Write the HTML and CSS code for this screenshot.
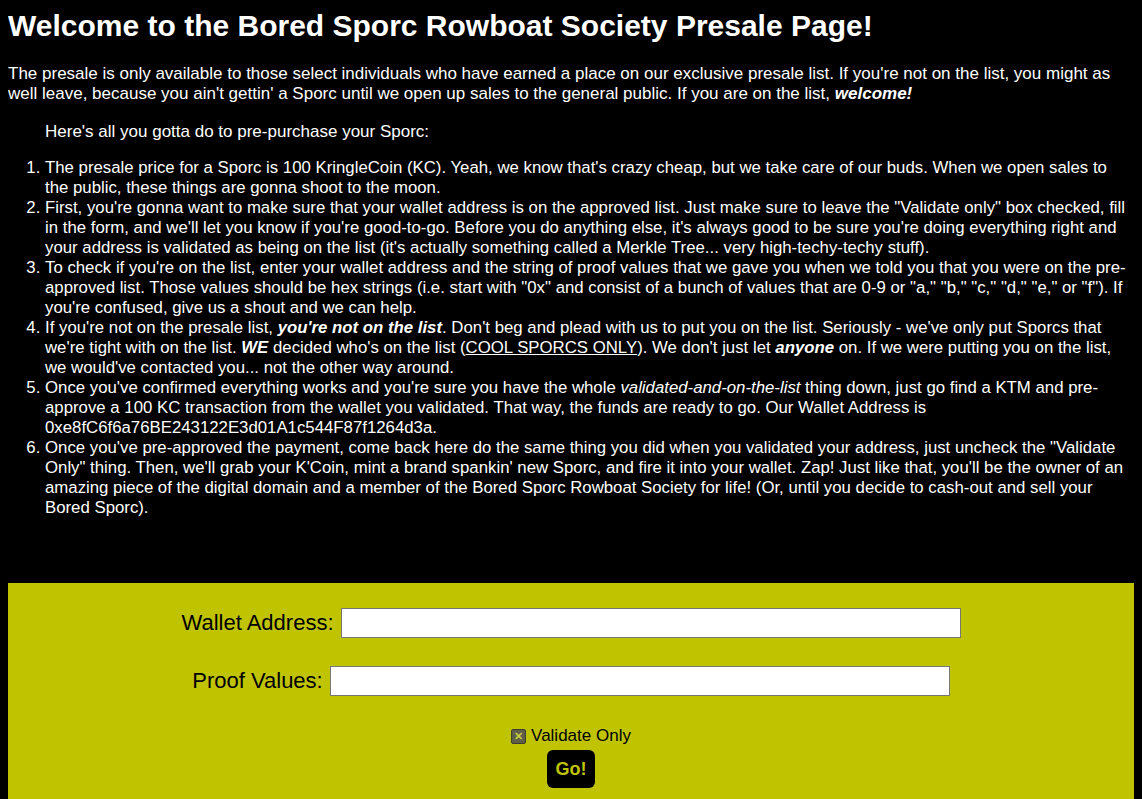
FILE: index.html
```html
<!DOCTYPE html>
<html>
<head>
<meta charset="utf-8">
<title>Bored Sporc Rowboat Society Presale</title>
<link rel="stylesheet" href="styles.css">
</head>
<body>
<h1 class="title">Welcome to the Bored Sporc Rowboat Society Presale Page!</h1>
<p class="intro">The presale is only available to those select individuals who have earned a place on our exclusive presale list. If you're not on the list, you might as well leave, because you ain't gettin' a Sporc until we open up sales to the general public. If you are on the list, <b><i>welcome!</i></b></p>
<p class="lead">Here's all you gotta do to pre-purchase your Sporc:</p>
<ol class="steps">
<li>The presale price for a Sporc is 100 KringleCoin (KC). Yeah, we know that's crazy cheap, but we take care of our buds. When we open sales to the public, these things are gonna shoot to the moon.</li>
<li>First, you're gonna want to make sure that your wallet address is on the approved list. Just make sure to leave the "Validate only" box checked, fill in the form, and we'll let you know if you're good-to-go. Before you do anything else, it's always good to be sure you're doing everything right and your address is validated as being on the list (it's actually something called a Merkle Tree... very high-techy-techy stuff).</li>
<li>To check if you're on the list, enter your wallet address and the string of proof values that we gave you when we told you that you were on the pre-approved list. Those values should be hex strings (i.e. start with "0x" and consist of a bunch of values that are 0-9 or "a," "b," "c," "d," "e," or "f"). If you're confused, give us a shout and we can help.</li>
<li>If you're not on the presale list, <b><i>you're not on the list</i></b>. Don't beg and plead with us to put you on the list. Seriously - we've only put Sporcs that we're tight with on the list. <b><i>WE</i></b> decided who's on the list (<u>COOL SPORCS ONLY</u>). We don't just let <b><i>anyone</i></b> on. If we were putting you on the list, we would've contacted you... not the other way around.</li>
<li>Once you've confirmed everything works and you're sure you have the whole <i>validated-and-on-the-list</i> thing down, just go find a KTM and pre-approve a 100 KC transaction from the wallet you validated. That way, the funds are ready to go. Our Wallet Address is 0xe8fC6f6a76BE243122E3d01A1c544F87f1264d3a.</li>
<li>Once you've pre-approved the payment, come back here do the same thing you did when you validated your address, just uncheck the "Validate Only" thing. Then, we'll grab your K'Coin, mint a brand spankin' new Sporc, and fire it into your wallet. Zap! Just like that, you'll be the owner of an amazing piece of the digital domain and a member of the Bored Sporc Rowboat Society for life! (Or, until you decide to cash-out and sell your Bored Sporc).</li>
</ol>
<form class="presale">
<div class="row">
<label class="label" for="wallet">Wallet Address:</label>
<input class="field" id="wallet" type="text">
</div>
<div class="row">
<label class="label" for="proof">Proof Values:</label>
<input class="field" id="proof" type="text">
</div>
<div class="check-row">
<span class="checkbox">&#x2715;</span>
<span class="check-label">Validate Only</span>
</div>
<div class="btn-row">
<button class="go" type="button">Go!</button>
</div>
</form>
</body>
</html>
```

FILE: styles.css
```css
html, body {
  background: #000;
}
body {
  margin: 8px;
  color: #fff;
  font-family: "Liberation Sans", Arial, sans-serif;
  font-size: 17px;
  line-height: 20px;
}
.title {
  font-size: 30px;
  line-height: 36px;
  font-weight: bold;
  margin: 0 0 20px 0;
}
.intro {
  margin: 0 0 18px 0;
}
.lead {
  margin: 0 0 16px 0;
  padding-left: 37px;
}
.steps {
  margin: 0 0 65px 0;
  padding-left: 37px;
  font-size: 16.8px;
}
.presale {
  background: #c0c400;
  color: #000;
  padding: 25px 0 10px 0;
  min-height: 240px;
  box-sizing: border-box;
  display: flex;
  flex-direction: column;
  align-items: center;
}
.row {
  display: flex;
  align-items: center;
  gap: 7px;
  margin-bottom: 28px;
}
.label {
  font-size: 22px;
  line-height: 30px;
}
.field {
  width: 620px;
  height: 30px;
  box-sizing: border-box;
  border: 1px solid #767676;
  background: #fff;
  margin: 0;
  padding: 2px 4px;
}
.check-row {
  display: flex;
  align-items: center;
  gap: 5px;
  font-size: 17px;
  margin-top: 2px;
}
.checkbox {
  width: 13px;
  height: 13px;
  background: #5e5e49;
  border: 1px solid #3e3e30;
  border-radius: 2px;
  color: #c8cc40;
  font-size: 11px;
  line-height: 13px;
  text-align: center;
  font-weight: bold;
}
.btn-row {
  margin-top: 4px;
}
.go {
  background: #000;
  color: #c0c400;
  border: none;
  border-radius: 6px;
  font-family: "Liberation Sans", Arial, sans-serif;
  font-weight: bold;
  font-size: 18px;
  width: 48px;
  height: 38px;
  padding: 0;
}
```
